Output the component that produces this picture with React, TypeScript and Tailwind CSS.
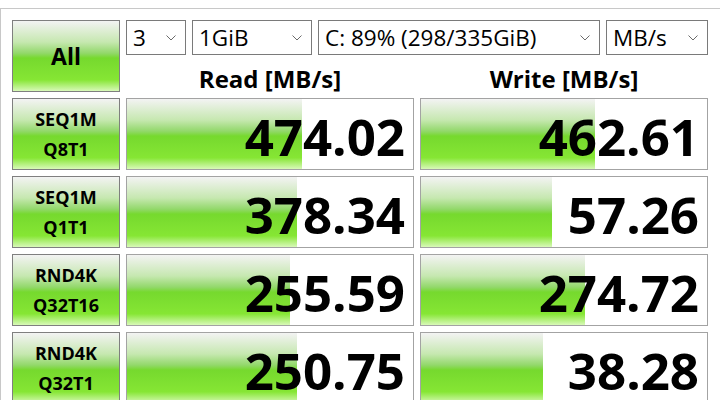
const green =
  "bg-[linear-gradient(to_bottom,#f3f3f3_0%,#c6e8b0_30%,#92d86a_46%,#76d92e_53%,#86e634_84%,#d8f9b8_100%)]";

const rows = [
  { l1: "SEQ1M", l2: "Q8T1", read: "474.02", rw: 175, write: "462.61", ww: 174 },
  { l1: "SEQ1M", l2: "Q1T1", read: "378.34", rw: 170, write: "57.26", ww: 131 },
  { l1: "RND4K", l2: "Q32T16", read: "255.59", rw: 163, write: "274.72", ww: 164 },
  { l1: "RND4K", l2: "Q32T1", read: "250.75", rw: 170, write: "38.28", ww: 122 },
];

function Chevron() {
  return (
    <svg width="10" height="6" viewBox="0 0 10 6" className="shrink-0">
      <path d="M0.5 0.5 L5 5 L9.5 0.5" fill="none" stroke="#6b6b6b" strokeWidth="1" />
    </svg>
  );
}

function Combo({ value, width }: { value: string; width: string }) {
  return (
    <div
      className={`${width} h-[35px] border border-[#7a7a7a] bg-white flex items-center justify-between pl-[6px] pr-[9px]`}
    >
      <span className="text-[22.5px] leading-none text-black pt-[2px]">{value}</span>
      <Chevron />
    </div>
  );
}

function Value({ text, bar }: { text: string; bar: number }) {
  return (
    <div className="relative h-[72px] border border-[#a3a3a3] bg-white flex items-center justify-end pr-[8px]">
      <div className={`absolute left-0 top-0 bottom-0 ${green}`} style={{ width: bar }} />
      <span className="relative text-[51px] font-bold leading-none text-black pt-[4px]">{text}</span>
    </div>
  );
}

export default function App() {
  return (
    <div className="w-[720px] h-[400px] overflow-hidden bg-white font-['Open_Sans',sans-serif]">
      <div className="h-[9px] border-b border-[#c8c8c8]" />
      <div className="h-[391px] border-l border-[#c8c8c8] pl-[11px] pt-[11px]">
        <div className="grid grid-cols-[108px_288px_288px] auto-rows-[72px] gap-[6px]">
          <div
            className={`border border-[#7f7f7f] ${green} flex items-center justify-center text-[23px] font-bold text-black`}
          >
            All
          </div>
          <div className="col-span-2 flex flex-col">
            <div className="flex gap-[6px]">
              <Combo value="3" width="w-[60px]" />
              <Combo value="1GiB" width="w-[120px]" />
              <Combo value="C: 89% (298/335GiB)" width="w-[282px]" />
              <Combo value="MB/s" width="w-[102px]" />
            </div>
            <div className="flex-1 grid grid-cols-2 gap-[6px] items-end">
              <div className="text-center text-[24px] font-bold leading-none pb-[1px]">Read [MB/s]</div>
              <div className="text-center text-[24px] font-bold leading-none pb-[1px]">Write [MB/s]</div>
            </div>
          </div>
          {rows.map((r, i) => (
            <div key={i} className="contents">
              <div
                className={`border border-[#7f7f7f] ${green} flex flex-col items-center justify-center text-[18px] font-bold leading-[30px] text-black`}
              >
                <span>{r.l1}</span>
                <span>{r.l2}</span>
              </div>
              <Value text={r.read} bar={r.rw} />
              <Value text={r.write} bar={r.ww} />
            </div>
          ))}
        </div>
      </div>
    </div>
  );
}
